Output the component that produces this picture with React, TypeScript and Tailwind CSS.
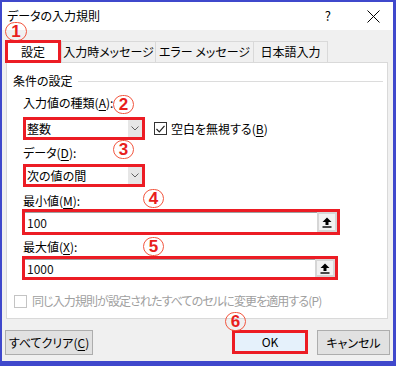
import React from "react";

const Num = ({ n, className }: { n: string; className: string }) => (
  <span
    className={`absolute w-[21px] h-[19px] rounded-full border-[1.5px] border-[#f2563f] flex items-center justify-center text-[17px] leading-none font-bold text-[#e8201c] font-['Liberation_Sans',sans-serif] ${className}`}
  >
    {n}
  </span>
);

const U = ({ c }: { c: string }) => <span className="underline underline-offset-[2px]">{c}</span>;

const Chevron = () => (
  <svg width="8" height="5" viewBox="0 0 8 5">
    <polyline points="0.5,0.5 4,4 7.5,0.5" fill="none" stroke="#606060" strokeWidth="1" />
  </svg>
);

const UploadIcon = () => (
  <svg width="10" height="11" viewBox="0 0 10 11">
    <polygon points="5,0.5 9.5,5 6.5,5 6.5,8 3.5,8 3.5,5 0.5,5" fill="#000" />
    <rect x="0.5" y="9.3" width="9" height="1.4" fill="#000" />
  </svg>
);

const Combo = ({ text, className }: { text: string; className: string }) => (
  <div className={`flex border-[3px] border-[#ec1c24] bg-white ${className}`}>
    <div className="flex-1 flex items-center pl-[1px] text-[12px] text-black">{text}</div>
    <div className="w-[14px] bg-[#e6e6e6] flex items-center justify-center">
      <Chevron />
    </div>
  </div>
);

const RefInput = ({ value, className }: { value: string; className: string }) => (
  <div className={`flex border-[3px] border-[#ec1c24] bg-white ${className}`}>
    <div className="flex-1 flex items-center pl-[2px] text-[12px] text-[#111] border-t border-[#a0a0a0]">
      {value}
    </div>
    <div className="w-[20px] bg-[#d6d6d6] p-[2px] flex">
      <div className="flex-1 bg-[#f2f2f2] flex items-center justify-center">
        <UploadIcon />
      </div>
    </div>
  </div>
);

const Tab = ({ label, w }: { label: string; w: string }) => (
  <div
    className={`h-[21px] ${w} border-t border-l border-[#d9d9d9] last:border-r bg-[#f0f0f0] flex items-center justify-center text-[12px] text-black`}
  >
    {label}
  </div>
);

export default function App() {
  return (
    <div className="w-[396px] h-[366px] bg-[#3f48cc] pt-[2px] pl-[2px] pr-[3px] pb-[5px] font-['Noto_Sans_CJK_JP',sans-serif] [font-feature-settings:'palt'] text-black">
      <div className="h-full bg-[#f0f0f0] flex flex-col">
        {/* title bar */}
        <div className="h-[28px] bg-white flex items-center pl-[5px] pr-[13px] text-[12px] leading-[14px]">
          <span>データの入力規則</span>
          <span className="ml-auto mr-[36px] text-[13px]">?</span>
          <svg width="13" height="13" viewBox="0 0 13 13">
            <path d="M0.5 0.5 L12.5 12.5 M12.5 0.5 L0.5 12.5" stroke="#000" strokeWidth="1" />
          </svg>
        </div>

        {/* tabs */}
        <div className="relative flex items-end pl-[3px] pt-[10px] h-[32px]">
          <Num n="1" className="left-[3px] top-[-8px] w-[22px] h-[18px]" />
          <div className="relative z-10 -mb-[1px] h-[23px] w-[56px] border-[3px] border-[#ec1c24] bg-white flex items-center justify-center text-[12px]">
            設定
          </div>
          <Tab label="入力時メッセージ" w="w-[94px]" />
          <Tab label="エラー メッセージ" w="w-[98px]" />
          <Tab label="日本語入力" w="w-[75px]" />
        </div>

        {/* panel */}
        <div className="ml-[4px] mr-[5px] h-[257px] border border-[#d9d9d9] bg-white flex flex-col text-[12px] leading-[14px]">
          <div className="mt-[11px] flex items-center pl-[6px] pr-[4px]">
            <span>条件の設定</span>
            <div className="flex-1 ml-[5px] h-px bg-[#dcdcdc]" />
          </div>

          <div className="pl-[16px] flex flex-col">
            <div className="relative mt-[8px] h-[14px]">
              入力値の種類(<U c="A" />):
              <Num n="2" className="left-[90px] top-[-1px]" />
            </div>
            <div className="mt-[7px] flex items-center">
              <Combo text="整数" className="w-[122px] h-[23px]" />
              <div className="ml-[9px] flex items-center">
                <div className="w-[13px] h-[13px] border border-[#333] bg-white flex items-center justify-center">
                  <svg width="9" height="8" viewBox="0 0 9 8">
                    <polyline points="0.5,4 3.3,6.8 8.5,0.8" fill="none" stroke="#222" strokeWidth="1.2" />
                  </svg>
                </div>
                <span className="ml-[4px]">
                  空白を無視する(<U c="B" />)
                </span>
              </div>
            </div>

            <div className="relative mt-[6px] h-[14px]">
              データ(<U c="D" />):
              <Num n="3" className="left-[90px] top-[-6px]" />
            </div>
            <Combo text="次の値の間" className="mt-[4px] w-[122px] h-[23px]" />

            <div className="relative mt-[7px] h-[14px]">
              最小値(<U c="M" />):
              <Num n="4" className="left-[120px] top-[-5px]" />
            </div>
            <RefInput value="100" className="mt-[1px] -ml-[1px] w-[318px] h-[26px]" />

            <div className="relative mt-[5px] h-[14px]">
              最大値(<U c="X" />):
              <Num n="5" className="left-[120px] top-[-3px]" />
            </div>
            <RefInput value="1000" className="mt-[2px] -ml-[1px] w-[316px] h-[24px]" />
          </div>

          <div className="mt-[14px] pl-[7px] flex items-center text-[#a0a0a0]">
            <div className="w-[13px] h-[13px] border border-[#c4c4c4] bg-white" />
            <span className="ml-[5px] tracking-[-0.9px]">同じ入力規則が設定されたすべてのセルに変更を適用する(P)</span>
          </div>
        </div>

        {/* buttons */}
        <div className="mt-[11px] flex pl-[3px] pr-[3px] text-[12px] leading-[14px]">
          <div className="w-[88px] h-[25px] border border-[#adadad] bg-[#e1e1e1] flex items-center justify-center">
            すべてクリア(<U c="C" />)
          </div>
          <div className="relative ml-auto w-[76px] h-[24px] border-[3px] border-[#ec1c24] bg-[#e5f1fb] flex items-center justify-center">
            OK
            <Num n="6" className="left-[-10px] top-[-21px]" />
          </div>
          <div className="ml-[9px] w-[73px] h-[25px] border border-[#adadad] bg-[#e1e1e1] flex items-center justify-center">
            キャンセル
          </div>
        </div>
      </div>
    </div>
  );
}
